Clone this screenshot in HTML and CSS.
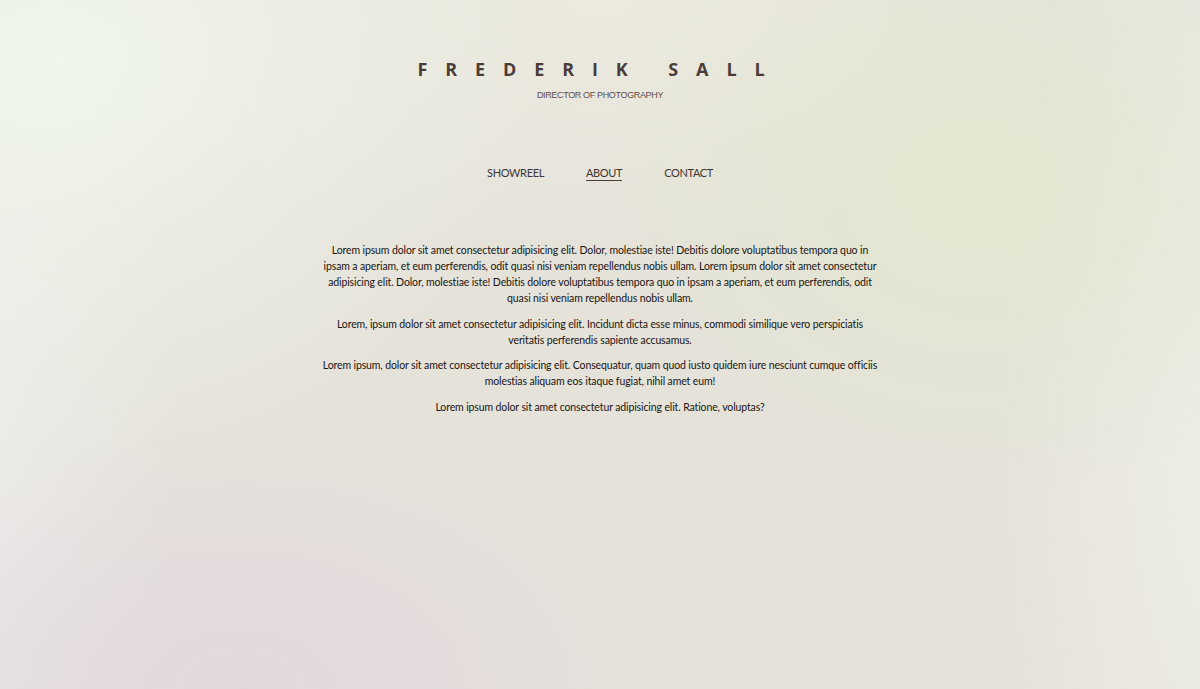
FILE: index.html
```html
<!DOCTYPE html>
<html lang="en">
<head>
<meta charset="utf-8">
<title>Frederik Sall</title>
<link rel="stylesheet" href="styles.css">
</head>
<body>
<div class="page">
  <header class="header">
    <h1 class="name">FREDERIK SALL</h1>
    <p class="role">DIRECTOR OF PHOTOGRAPHY</p>
  </header>
  <nav class="nav">
    <a class="nav-link" href="#">SHOWREEL</a>
    <a class="nav-link active" href="#">ABOUT</a>
    <a class="nav-link" href="#">CONTACT</a>
  </nav>
  <main class="about">
    <p>Lorem ipsum dolor sit amet consectetur adipisicing elit. Dolor, molestiae iste! Debitis dolore voluptatibus tempora quo in ipsam a aperiam, et eum perferendis, odit quasi nisi veniam repellendus nobis ullam. Lorem ipsum dolor sit amet consectetur adipisicing elit. Dolor, molestiae iste! Debitis dolore voluptatibus tempora quo in ipsam a aperiam, et eum perferendis, odit quasi nisi veniam repellendus nobis ullam.</p>
    <p>Lorem, ipsum dolor sit amet consectetur adipisicing elit. Incidunt dicta esse minus, commodi similique vero perspiciatis veritatis perferendis sapiente accusamus.</p>
    <p>Lorem ipsum, dolor sit amet consectetur adipisicing elit. Consequatur, quam quod iusto quidem iure nesciunt cumque officiis molestias aliquam eos itaque fugiat, nihil amet eum!</p>
    <p>Lorem ipsum dolor sit amet consectetur adipisicing elit. Ratione, voluptas?</p>
  </main>
</div>
</body>
</html>
```

FILE: styles.css
```css
html, body {
  margin: 0;
  padding: 0;
  height: 100%;
}

body {
  font-family: "Lato", "Open Sans", sans-serif;
  color: #1a1512;
  background-color: #e5e2da;
  background-image:
    radial-gradient(ellipse 480px 400px at 60px 60px, rgba(240, 247, 236, 0.95), rgba(240, 247, 236, 0) 100%),
    radial-gradient(ellipse 380px 300px at 980px 190px, rgba(226, 232, 206, 0.9), rgba(226, 232, 206, 0) 100%),
    radial-gradient(ellipse 420px 260px at 240px 689px, rgba(226, 214, 222, 0.95), rgba(226, 214, 222, 0) 100%),
    radial-gradient(ellipse 240px 700px at 1240px 420px, rgba(240, 240, 234, 0.9), rgba(240, 240, 234, 0) 100%),
    radial-gradient(ellipse 220px 500px at -40px 430px, rgba(238, 237, 236, 0.9), rgba(238, 237, 236, 0) 100%),
    radial-gradient(ellipse 500px 260px at 600px 0px, rgba(238, 236, 224, 0.8), rgba(238, 236, 224, 0) 100%);
  min-height: 689px;
}

.page {
  display: flex;
  flex-direction: column;
  align-items: center;
  padding-top: 57px;
}

.header {
  display: flex;
  flex-direction: column;
  align-items: center;
}

.name {
  margin: 0;
  font-family: "Open Sans", sans-serif;
  font-weight: 700;
  font-size: 18px;
  line-height: 24px;
  letter-spacing: 17.9px;
  color: #4a3d39;
}

.role {
  margin: 8px 0 0;
  font-family: "Liberation Sans", Arial, sans-serif;
  font-size: 9px;
  line-height: 12px;
  letter-spacing: -0.35px;
  color: #5b4d48;
}

.nav {
  display: flex;
  gap: 42px;
  margin-top: 64px;
}

.nav-link {
  font-size: 11px;
  line-height: 15px;
  letter-spacing: -0.35px;
  color: #3f3531;
  text-decoration: none;
  border-bottom: 1px solid transparent;
}

.nav-link.active {
  border-bottom: 1px solid #4a3d39;
}

.about {
  width: 558px;
  margin-top: 61px;
  text-align: center;
}

.about p {
  margin: 0 0 9.5px;
  font-size: 10.5px;
  line-height: 16px;
  letter-spacing: -0.12px;
}
```
